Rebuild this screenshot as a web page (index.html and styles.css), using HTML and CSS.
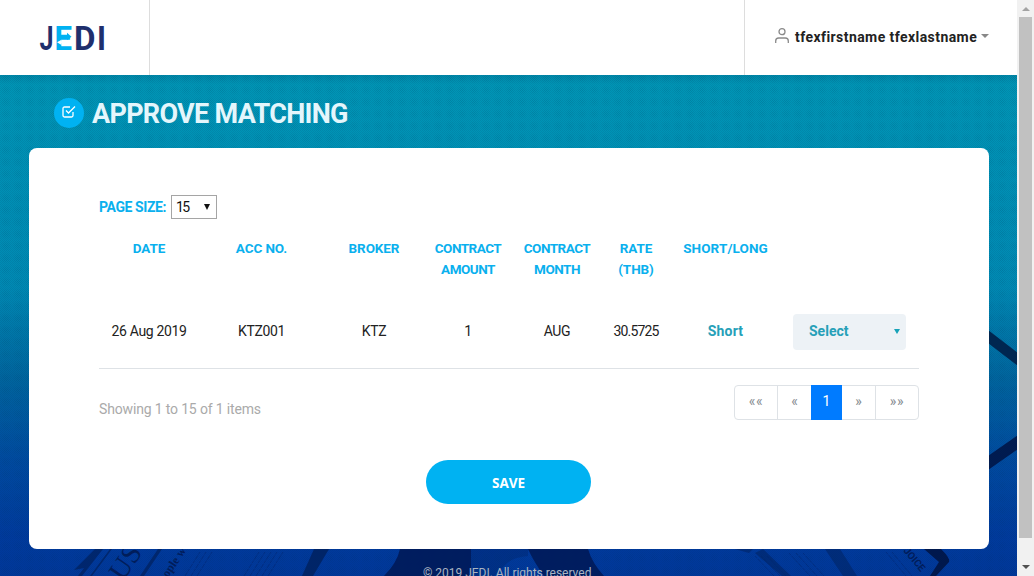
FILE: index.html
```html
<!DOCTYPE html>
<html lang="en">
<head>
<meta charset="utf-8">
<title>JEDI - Approve Matching</title>
<link rel="stylesheet" href="styles.css">
</head>
<body>
<div class="window">
  <div class="page">
    <header class="topbar">
      <div class="brand">
        <svg class="logo" width="70" height="36" viewBox="0 0 70 36">
          <g font-family="Roboto, sans-serif" font-weight="700" font-size="34">
            <text x="-.5" y="25.500" fill="#1f2f6d" textLength="14" lengthAdjust="spacingAndGlyphs">J</text>
            <text x="14.500" y="25.500" fill="#00b2f2" textLength="17.500" lengthAdjust="spacingAndGlyphs">E</text>
            <text x="34" y="25.500" fill="#1f2f6d" textLength="21.500" lengthAdjust="spacingAndGlyphs">D</text>
            <text x="57" y="25.500" fill="#1f2f6d" textLength="9" lengthAdjust="spacingAndGlyphs">I</text>
          </g>
          <path d="M20 10.800h7V8.800l4.500 4-4.500 3.200v-1.700h-7z" fill="#00b2f2"/>
          <path d="M30 17.200H21.500v-1.500l-4.500 2.600 4.500 2.600v-1.600H30z" fill="#fff"/>
        </svg>
      </div>
      <div class="account">
        <svg class="user-icon" width="14" height="15" viewBox="0 0 14 15" fill="none" stroke="#8a8a8a" stroke-width="1.3"><circle cx="7" cy="3.700" r="3"/><path d="M.7 15v-2q0-3 3-3h6.600q3 0 3 3v2"/></svg>
        <span class="username">tfexfirstname tfexlastname</span>
        <span class="caret"></span>
      </div>
    </header>
    <main class="content">
      <svg class="backdrop" width="1017" height="501" viewBox="0 75 1017 501">
        <defs>
          <linearGradient id="sea" x2="0" y2="1"><stop offset="0" stop-color="#0096b6"/><stop offset=".42" stop-color="#008ab4"/><stop offset=".6" stop-color="#00669f"/><stop offset=".77" stop-color="#004aa0"/><stop offset=".92" stop-color="#003a9d"/><stop offset="1" stop-color="#00379a"/></linearGradient>
          <pattern id="dots" width="2" height="2" patternUnits="userSpaceOnUse"><path d="M0 0h1v1H0zM1 1h1v1H1z" fill="#003052" shape-rendering="crispEdges"/></pattern>
          <radialGradient id="fade"><stop offset="0" stop-color="#fff"/><stop offset="1" stop-color="#777"/></radialGradient>
          <pattern id="cells" width="12" height="12" patternUnits="userSpaceOnUse"><rect width="12" height="12" fill="url(#fade)"/></pattern>
          <mask id="weave" maskUnits="userSpaceOnUse" x="0" y="75" width="1017" height="501"><rect y="75" width="1017" height="501" fill="url(#cells)"/></mask>
          <linearGradient id="shade" x2="0" y2="1"><stop offset="0" stop-color="#005275" stop-opacity=".2"/><stop offset="1" stop-color="#005275" stop-opacity="0"/></linearGradient>
        </defs>
        <rect y="75" width="1017" height="501" fill="url(#sea)"/>
        <rect y="75" width="1017" height="10" fill="url(#shade)"/>
        <path d="M988 330l30 23v13l-30-23z" fill="#002650"/>
        <path d="M988 456l30-21v14l-30 21z" fill="#001a50"/>
        <g fill="#001f5c">
          <path d="M95 549h8l-21 27h-4l6-8-10 2z" opacity=".7"/>
          <path d="M110 549h2l-20 27h-2zM158 549h4l-18 27h-4z" opacity=".7"/>
          <path d="M314 549h15l-16 27h-11z" opacity=".8"/>
          <path d="M400 549h71v27h-87q13-13 16-27zM528 549h60q4 14 16 27h-60q-10-14-16-27z" fill="#001c60"/>
          <path d="M471 549h57v7q-16 1-24 10l-10 10h-23z" opacity=".3"/>
          <path d="M735 549h18l-4 4zM763 549l-8 4 27 23h9zM825 549h15l17 27h-14z" opacity=".5"/>
          <path d="M924 549h17q10 10 8 13l-13 14h-6l9-14z" fill="#00174d"/>
        </g>
        <g stroke="#00256f" stroke-width="1" opacity=".5" stroke-dasharray="3 1 5 1">
          <path d="M200 552l-15 24m21-24l-15 24m21-24l-15 24m62-24l-15 24m21-24l-15 24m21-24l-15 24m21-24l-15 24m21-24l-15 24M755 556l19 20m-13-20l19 20m-13-20l19 20m3-23l21 23m-14-23l21 23m-14-23l21 23m62-24l20 24m-14-24l20 24"/>
        </g>
        <g fill="#001c5b" font-family="Liberation Serif, serif">
          <text transform="translate(123 582) rotate(-56)" font-size="28">US</text>
          <text transform="translate(168 578) rotate(-56)" font-size="12" font-weight="700">ople w</text>
          <text transform="translate(903 551) rotate(50)" font-size="10" font-family="Roboto, sans-serif" font-weight="700">JOICE</text>
        </g>
        <rect y="75" width="1017" height="501" fill="url(#dots)" opacity=".2" mask="url(#weave)"/>
      </svg>
      <h1 class="title">
        <span class="badge"><svg width="14" height="12" viewBox="0 0 14 12" fill="none" stroke="#fff" stroke-width="1.300"><path d="M8 1H2.500Q1 1 1 2.500v7Q1 11 2.500 11h7Q11 11 11 9.500V6"/><path d="M4 4.500L6.500 7 13 .5"/></svg></span>
        <span class="title-text">APPROVE MATCHING</span>
      </h1>
      <section class="card">
        <div class="page-size"><span class="size-label">PAGE SIZE:</span><div class="size-select"><span>15</span><i class="arrow"></i></div></div>
        <table class="deals">
          <colgroup><col class="w100"><col class="w125"><col class="w100"><col class="w88"><col class="w90"><col class="w68"><col class="w111"><col class="w138"></colgroup>
          <thead><tr><th>DATE</th><th>ACC NO.</th><th>BROKER</th><th class="tight">CONTRACT<br>AMOUNT</th><th class="tight">CONTRACT<br>MONTH</th><th>RATE<br>(THB)</th><th class="side-head">SHORT/LONG</th><th></th></tr></thead>
          <tbody><tr><td>26 Aug 2019</td><td>KTZ001</td><td>KTZ</td><td>1</td><td>AUG</td><td class="rate">30.5725</td><td class="side">Short</td><td class="action-cell"><div class="action"><span>Select</span><i class="arrow small"></i></div></td></tr></tbody>
        </table>
        <div class="summary">
          <span class="showing">Showing 1 to 15 of 1 items</span>
          <nav class="pager"><a class="wide">««</a><a>«</a><a class="active">1</a><a>»</a><a class="wide">»»</a></nav>
        </div>
        <button class="save">SAVE</button>
      </section>
      <footer class="footer">© 2019 JEDI. All rights reserved</footer>
    </main>
  </div>
  <div class="scrollbar"><i class="up"></i><div class="thumb"></div><i class="down"></i></div>
</div>
</body>
</html>
```
FILE: styles.css
```css
* { box-sizing: border-box; }
body { margin: 0; overflow: hidden; font-family: Roboto, sans-serif; font-size: 14px; color: #222; }
.window { display: flex; width: 1034px; height: 576px; overflow: hidden; }
.page { width: 1017px; display: flex; flex-direction: column; }
.topbar { height: 75px; display: flex; justify-content: space-between; background: #fff; }
.brand { width: 150px; border-right: 1px solid #ddd; padding: 24px 0 0 40px; }
.logo { display: block; overflow: visible; }
.account { width: 273px; border-left: 1px solid #ddd; display: flex; padding: 28px 0 0 30px; }
.username { font-weight: 700; line-height: 18px; margin-left: 6px; width: 184px; letter-spacing: .43px; white-space: nowrap; }
.caret { margin: 6px 0 0 2px; width: 0; height: 0; border: 4px solid transparent; border-top-color: #888; border-bottom: 0; }
.content { position: relative; height: 501px; overflow: hidden; isolation: isolate; }
.backdrop { position: absolute; inset: 0; z-index: -1; }
.title { display: flex; align-items: center; height: 73px; margin: 0; padding: 3px 0 0 54px; font-size: 27px; color: #e4f6fc; }
.badge { width: 30px; height: 30px; border-radius: 50%; background: #00b2f2; display: flex; align-items: center; justify-content: center; padding-bottom: 3px; margin-right: 8px; }
.title-text { line-height: 32px; padding-top: 2px; letter-spacing: -.7px; white-space: nowrap; }
.card { width: 960px; height: 401px; margin-left: 29px; padding: 47px 70px 0; background: #fff; border-radius: 8px; display: flex; flex-direction: column; }
.page-size { display: flex; align-items: center; height: 24px; }
.size-label { width: 72px; color: #0ab0ee; font-weight: 700; font-size: 14px; letter-spacing: -.4px; white-space: nowrap; }
.size-select { width: 46px; height: 24px; border: 1px solid #a5a5a5; padding: 0 6px 0 4px; display: flex; align-items: center; justify-content: space-between; letter-spacing: -1.5px; color: #111; }
.arrow { border: 3.500px solid transparent; border-top: 6px solid #111; border-bottom: 0; }
.deals { width: 820px; margin-top: 10px; table-layout: fixed; border-collapse: collapse; border-bottom: 1px solid #dee2e6; text-align: center; }
.w100 { width: 100px; } .w125 { width: 125px; } .w88 { width: 88px; } .w90 { width: 90px; } .w68 { width: 68px; } .w111 { width: 111px; } .w138 { width: 138px; }
.deals th { height: 66px; padding: 9px 0 0; vertical-align: top; line-height: 21px; font-size: 13.500px; letter-spacing: -.1px; color: #0ab0ee; }
.deals th.tight { letter-spacing: -.5px; }
.deals th.side-head { letter-spacing: .1px; }
.deals td { height: 73px; padding: 0; vertical-align: middle; letter-spacing: -.35px; }
.deals .action-cell { padding-top: 2px; }
.deals .rate { letter-spacing: -.85px; }
.deals .side { color: #26a0b8; font-weight: 700; letter-spacing: .2px; }
.action { width: 113px; height: 36px; margin-left: 12px; padding: 0 6px 2px 16px; background: #edf2f6; border-radius: 4px; display: flex; align-items: center; justify-content: space-between; color: #26a0b8; font-weight: 700; letter-spacing: 0; }
.arrow.small { border: 3px solid transparent; border-top: 5px solid #17a2b8; border-bottom: 0; }
.summary { display: flex; justify-content: space-between; margin-top: 16px; }
.showing { line-height: 20px; padding-top: 14px; color: #aaa; letter-spacing: -.16px; }
.pager { display: flex; width: 185px; height: 35px; border: 1px solid #dee2e6; border-radius: 4px; }
.pager a { width: 33px; display: flex; flex: none; align-items: center; justify-content: center; padding-bottom: 2px; font-size: 14px; color: #868b90; }
.pager a.wide { width: 42px; letter-spacing: .8px; }
.pager a + a { border-left: 1px solid #dee2e6; width: 34px; }
.pager a.wide:last-child { width: 43px; }
.pager a.active { width: 31px; margin: -1px 0; border: 0; background: #007bff; color: #fff; }
.pager a.active + a { border-left: 0; width: 33px; }
.save { width: 165px; height: 44px; margin: 40px auto 0 327px; padding: 2px 0 0; flex: none; border: 0; border-radius: 22px; background: #00b2f2; color: #fff; font: 700 13.500px "Open Sans", sans-serif; }
.footer { margin: 16px 0 0 423px; line-height: 16px; font-size: 12px; letter-spacing: -.02px; color: #a9b4c1; white-space: nowrap; }
.scrollbar { width: 17px; height: 576px; background: #f1f1f1; display: flex; flex-direction: column; align-items: center; }
.scrollbar i { width: 0; height: 0; border: 4px solid transparent; }
.up { margin-top: 7px; border-top: 0 !important; border-bottom: 4px solid #a3a3a3 !important; }
.thumb { width: 13px; height: 521px; margin-top: 6px; background: #c1c1c1; }
.down { margin-top: 27px; border-bottom: 0 !important; border-top: 4px solid #505050 !important; }
```
